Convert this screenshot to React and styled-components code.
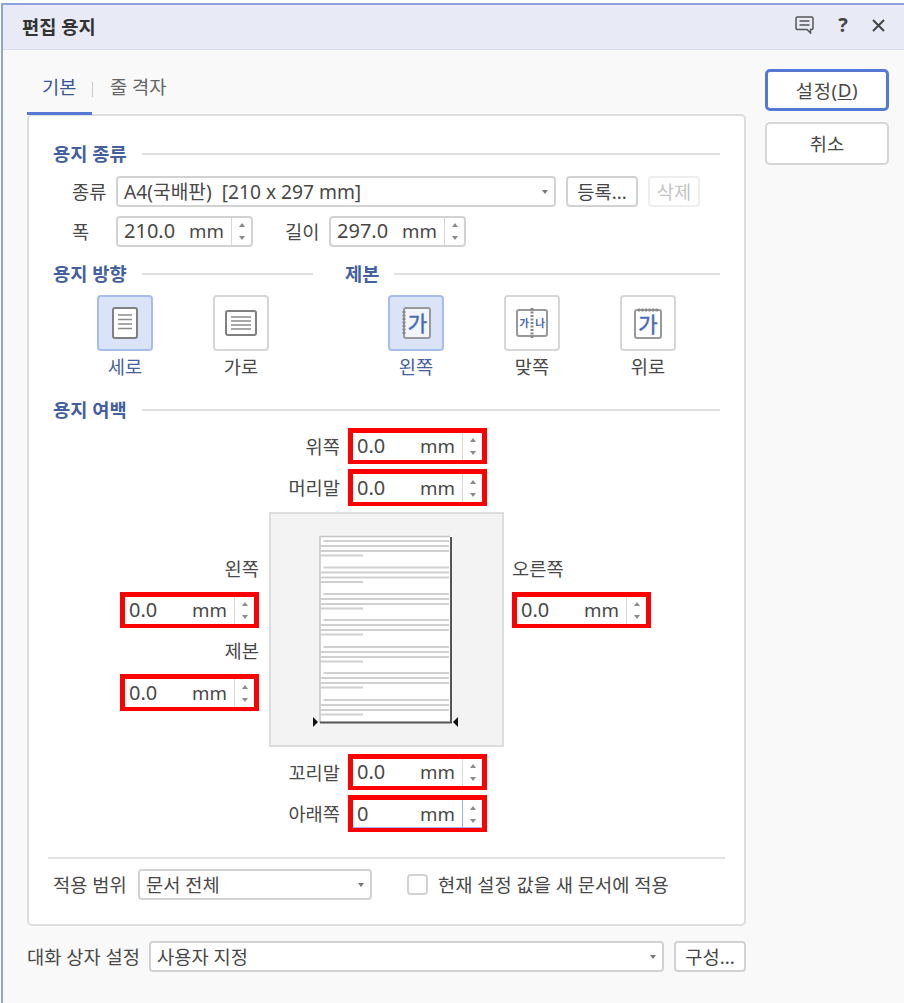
import styled, { createGlobalStyle } from "styled-components";

const GlobalStyle = createGlobalStyle`
  html, body {
    margin: 0;
    padding: 0;
    background: #fff;
  }
  * {
    box-sizing: border-box;
  }
`;

const FONT = `"Noto Sans", "Noto Sans CJK KR", sans-serif`;

const Page = styled.div`
  width: 904px;
  height: 1003px;
  padding: 3px 0 0 1px;
  overflow: hidden;
  font-family: ${FONT};
  font-size: 18.7px;
  color: #484848;
`;

const Dialog = styled.div`
  height: 1000px;
  background: #f9f9f9;
  border-top: 2px solid #8ea3dc;
  border-left: 2px solid #8ea3dc;
`;

const TitleBar = styled.div`
  height: 45px;
  display: flex;
  align-items: center;
  justify-content: space-between;
  padding: 0 19px 4px 19px;
  background: #e8ebf6;
  border-bottom: 1px solid #d8dcec;
`;

const Title = styled.div`
  font-weight: 700;
  font-size: 18.7px;
  color: #333;
`;

const TitleIcons = styled.div`
  display: flex;
  align-items: center;
  gap: 20px;
`;

const Help = styled.span`
  width: 18px;
  text-align: center;
  font-size: 20px;
  font-weight: 700;
  line-height: 1;
  color: #444;
`;

const Body = styled.div`
  display: flex;
  gap: 19px;
  padding-left: 24px;
`;

const Main = styled.div`
  width: 719px;
`;

const Tabs = styled.div`
  height: 64px;
  display: flex;
  align-items: flex-start;
`;

const Tab = styled.div`
  height: 65px;
  padding-top: 23px;
  line-height: 28px;
  width: ${(p) => p.$width}px;
  padding-left: ${(p) => p.$pad}px;
  color: ${(p) => (p.$active ? "#3a5596" : "#666")};
  border-bottom: ${(p) => (p.$active ? "3px solid #5578d6" : "none")};
  position: relative;
  z-index: 1;
`;

const TabSep = styled.div`
  width: 1px;
  height: 15px;
  margin-top: 32px;
  background: #c8c8c8;
`;

const Panel = styled.div`
  height: 812px;
  background: #fff;
  border: 2px solid #ddd;
  border-radius: 5px;
  padding: 26px 24px 0;
`;

const SectionTitle = styled.div`
  height: 24px;
  display: flex;
  align-items: center;
  gap: 15px;
  color: #45609f;
  font-weight: 700;
  font-size: 18.7px;
  margin-top: ${(p) => p.$top || 0}px;
  white-space: nowrap;
  &::after {
    content: "";
    flex: 1;
    height: 2px;
    background: #e0e0e0;
  }
`;

const SectionText = styled.span`
  margin-bottom: 4px;
`;

const Row = styled.div`
  display: flex;
  align-items: center;
  margin-top: ${(p) => p.$top}px;
  padding-left: ${(p) => p.$left || 0}px;
`;

const Label = styled.div`
  width: ${(p) => p.$width}px;
  flex: none;
  white-space: nowrap;
  margin-left: ${(p) => p.$left || 0}px;
  margin-bottom: 2px;
`;

const Box = styled.div`
  height: 31px;
  width: ${(p) => p.$width}px;
  flex: none;
  display: flex;
  align-items: center;
  background: #fff;
  border: 2px solid #d2d2d2;
  border-radius: 4px;
  padding-left: 6px;
  white-space: nowrap;
`;

const BoxText = styled.span`
  flex: 1;
  font-size: ${(p) => p.$size || 18.7}px;
  margin-bottom: 2px;
`;

const Caret = styled.span`
  flex: none;
  width: 0;
  height: 0;
  margin-right: 6px;
  border-left: 3.5px solid transparent;
  border-right: 3.5px solid transparent;
  border-top: 4px solid #777;
`;

const Unit = styled.span`
  flex: none;
  margin: 0 7px 2px 0;
`;

const SpinButtons = styled.div`
  flex: none;
  width: 20px;
  height: 100%;
  display: flex;
  flex-direction: column;
  align-items: center;
  justify-content: center;
  gap: 9px;
  border-left: 1px solid ${(p) => (p.$focus ? "#9db2e6" : "#d8d8d8")};
`;

const ArrowUp = styled.span`
  width: 0;
  height: 0;
  border-left: 3.5px solid transparent;
  border-right: 3.5px solid transparent;
  border-bottom: 4px solid #8a8a8a;
`;

const ArrowDown = styled(ArrowUp)`
  border-bottom: none;
  border-top: 4px solid #8a8a8a;
`;

const Button = styled.div`
  height: 31px;
  width: ${(p) => p.$width}px;
  flex: none;
  margin-left: 10px;
  padding-bottom: 2px;
  display: flex;
  align-items: center;
  justify-content: center;
  background: #fff;
  border: 2px solid ${(p) => (p.$disabled ? "#eee" : "#d2d2d2")};
  border-radius: 4px;
  color: ${(p) => (p.$disabled ? "#c4c4c4" : "#444")};
  white-space: nowrap;
`;

const OptionColumns = styled.div`
  display: grid;
  grid-template-columns: 260px 375px;
  column-gap: 32px;
  margin-top: 15px;
`;

const Tiles = styled.div`
  display: flex;
  gap: 60px;
  margin-top: 9px;
  padding-left: ${(p) => p.$left}px;
`;

const TileItem = styled.div`
  width: 56px;
  display: flex;
  flex-direction: column;
  align-items: center;
  gap: 4px;
  color: ${(p) => (p.$selected ? "#45609f" : "#484848")};
`;

const Tile = styled.div`
  width: 56px;
  height: 56px;
  display: flex;
  align-items: center;
  justify-content: center;
  background: ${(p) => (p.$selected ? "#dae3f8" : "#fff")};
  border: 2px solid ${(p) => (p.$selected ? "#a9bdec" : "#d6d6d6")};
  border-radius: 4px;
`;

const TileLabel = styled.div`
  height: 24px;
  line-height: 24px;
  white-space: nowrap;
`;

const MarginGrid = styled.div`
  display: grid;
  grid-template-columns: 206px 10px 235px 8px 139px;
  margin-top: 6px;
`;

const FieldStack = styled.div`
  grid-column: 3;
  grid-row: ${(p) => p.$row};
  display: flex;
  flex-direction: column;
  gap: 5px;
  padding-right: 17px;
  margin: ${(p) => p.$margin};
`;

const FieldRow = styled.div`
  display: flex;
  align-items: center;
  justify-content: flex-end;
  gap: 8px;
  white-space: nowrap;
`;

const FieldLabel = styled.span`
  margin-bottom: 2px;
`;

const SideColumn = styled.div`
  grid-row: 2;
  grid-column: ${(p) => (p.$right ? 5 : 1)};
  display: flex;
  flex-direction: column;
  align-items: ${(p) => (p.$right ? "flex-start" : "flex-end")};
  padding-top: 43px;
`;

const SideLabel = styled.div`
  height: 28px;
  line-height: 28px;
  margin-top: ${(p) => p.$top || 0}px;
  margin-bottom: 9px;
`;

const RedField = styled.div`
  width: 139px;
  height: ${(p) => p.$height}px;
  flex: none;
  display: flex;
  align-items: center;
  background: #fff;
  border: 5px solid #fe0000;
  border-bottom-width: 4px;
  padding-left: 4px;
  box-shadow: ${(p) => (p.$focus ? "inset 0 -1px 0 #9db2e6" : "none")};
`;

const Preview = styled.div`
  grid-column: 3;
  grid-row: 2;
  width: 235px;
  height: 235px;
  background: #f3f3f3;
  border: 2px solid #ddd;
  svg {
    display: block;
  }
`;

const Divider = styled.div`
  height: 2px;
  margin: 25px -5px 0;
  background: #e2e2e2;
`;

const Checkbox = styled.div`
  width: 21px;
  height: 21px;
  flex: none;
  margin: 0 10px 0 35px;
  background: #fff;
  border: 2px solid #d2d2d2;
  border-radius: 4px;
`;

const Footer = styled.div`
  display: flex;
  align-items: center;
  margin-top: 15px;
`;

const SideButtons = styled.div`
  width: 124px;
  padding-top: 19px;
  display: flex;
  flex-direction: column;
  gap: 11px;
`;

const ActionButton = styled.div`
  height: ${(p) => p.$height}px;
  padding-bottom: 2px;
  display: flex;
  align-items: center;
  justify-content: center;
  background: #fff;
  border: ${(p) => (p.$primary ? "3px solid #5578d6" : "2px solid #d6d6d6")};
  border-radius: 5px;
  letter-spacing: ${(p) => (p.$primary ? "0.6px" : "0")};
  u {
    text-underline-offset: 2px;
  }
`;

const paperLines = [541, 567.5, 594, 620, 647, 673, 700];

const PaperPreview = () => (
  <svg width="231" height="231" viewBox="271 514 231 231">
    <rect x="320" y="536" width="132" height="187" fill="#fff" />
    <path d="M320 536.5H450M320 536V723" stroke="#c4c4c4" strokeWidth="1.5" fill="none" />
    {paperLines.map((y) => (
      <g key={y} stroke="#d0d0d0" strokeWidth="2">
        <path d={`M323.5 ${y}H449`} />
        <path d={`M320 ${y + 5}H449`} />
        <path d={`M320 ${y + 10}H449`} />
        <path d={`M320 ${y + 14.5}H363`} />
      </g>
    ))}
    <path d="M451 537V722.5H320" stroke="#555" strokeWidth="2" fill="none" />
    <path d="M313 717V727L318 722Z" fill="#111" />
    <path d="M458 717V727L453 722Z" fill="#111" />
  </svg>
);

const PortraitIcon = () => (
  <svg width="26" height="32" viewBox="0 0 26 32">
    <rect x="1" y="1" width="24" height="30" rx="2" fill="#fff" stroke="#808080" strokeWidth="2" />
    <path d="M6 8H20M6 12.5H20M6 17H20M6 21.5H20" stroke="#8c8c8c" strokeWidth="1.5" />
  </svg>
);

const LandscapeIcon = () => (
  <svg width="32" height="26" viewBox="0 0 32 26">
    <rect x="1" y="1" width="30" height="24" rx="2" fill="#fff" stroke="#808080" strokeWidth="2" />
    <path d="M6 7H26M6 11H26M6 15H26M6 19H26" stroke="#8c8c8c" strokeWidth="1.5" />
  </svg>
);

const Ga = ({ x, y, size, weight = 400, text = "가" }) => (
  <text
    x={x}
    y={y}
    fontSize={size}
    fontWeight={weight}
    fill="#4a6ab8"
    stroke="#4a6ab8"
    strokeWidth={weight === 400 ? 0.5 : 0}
    textAnchor="middle"
    fontFamily={FONT}
  >
    {text}
  </text>
);

const BindLeftIcon = () => (
  <svg width="30" height="32" viewBox="0 0 30 32">
    <rect x="3" y="1" width="26" height="30" rx="2" fill="#f2f5fc" stroke="#999" strokeWidth="2" />
    <path d="M3 4V28" stroke="#888" strokeWidth="3" strokeDasharray="2 1.5" />
    <Ga x="16.5" y="24" size="21" />
  </svg>
);

const BindFacingIcon = () => (
  <svg width="32" height="32" viewBox="0 0 32 32">
    <rect x="1" y="3" width="30" height="26" rx="2" fill="#fff" stroke="#999" strokeWidth="2" />
    <path d="M16 1V31" stroke="#888" strokeWidth="3" strokeDasharray="2 1.5" />
    <Ga x="8" y="20" size="10.5" weight={700} />
    <Ga x="24" y="20" size="10.5" weight={700} text="나" />
  </svg>
);

const BindTopIcon = () => (
  <svg width="28" height="32" viewBox="0 0 28 32">
    <rect x="1" y="3" width="26" height="28" rx="2" fill="#fff" stroke="#999" strokeWidth="2" />
    <path d="M4 3H24" stroke="#888" strokeWidth="3" strokeDasharray="2 1.5" />
    <Ga x="14" y="25" size="21" />
  </svg>
);

const CommentIcon = () => (
  <svg width="19" height="18" viewBox="0 0 19 18" fill="none" stroke="#555" strokeWidth="1.5">
    <path d="M2.5 1H16.5A1.5 1.5 0 0 1 18 2.5V12A1.5 1.5 0 0 1 16.5 13.5H15.5V17L12 13.5H2.5A1.5 1.5 0 0 1 1 12V2.5A1.5 1.5 0 0 1 2.5 1Z" />
    <path d="M4.5 5H14.5M4.5 9H14.5" />
  </svg>
);

const CloseIcon = () => (
  <svg width="13" height="13" viewBox="0 0 13 13" stroke="#444" strokeWidth="2">
    <path d="M1 1L12 12M12 1L1 12" />
  </svg>
);

const Spinner = ({ focus }) => (
  <SpinButtons $focus={focus}>
    <ArrowUp />
    <ArrowDown />
  </SpinButtons>
);

const MarginField = ({ value = "0.0", height = 36, focus }) => (
  <RedField $height={height} $focus={focus}>
    <BoxText $size={20}>{value}</BoxText>
    <Unit>mm</Unit>
    <Spinner focus={focus} />
  </RedField>
);

const App = () => (
  <Page>
    <GlobalStyle />
    <Dialog>
      <TitleBar>
        <Title>편집 용지</Title>
        <TitleIcons>
          <CommentIcon />
          <Help>?</Help>
          <CloseIcon />
        </TitleIcons>
      </TitleBar>
      <Body>
        <Main>
          <Tabs>
            <Tab $active $width={65} $pad={15}>기본</Tab>
            <TabSep />
            <Tab $width={90} $pad={17}>줄 격자</Tab>
          </Tabs>
          <Panel>
            <SectionTitle><SectionText>용지 종류</SectionText></SectionTitle>
            <Row $top={10} $left={19}>
              <Label $width={44}>종류</Label>
              <Box $width={440}>
                <BoxText $size={19.2}>A4(국배판)&nbsp; [210 x 297 mm]</BoxText>
                <Caret />
              </Box>
              <Button $width={72}>등록...</Button>
              <Button $width={52} $disabled>삭제</Button>
            </Row>
            <Row $top={9} $left={19}>
              <Label $width={44}>폭</Label>
              <Box $width={137}>
                <BoxText $size={20}>210.0</BoxText>
                <Unit>mm</Unit>
                <Spinner />
              </Box>
              <Label $width={44} $left={32}>길이</Label>
              <Box $width={137}>
                <BoxText $size={20}>297.0</BoxText>
                <Unit>mm</Unit>
                <Spinner />
              </Box>
            </Row>
            <OptionColumns>
              <div>
                <SectionTitle><SectionText>용지 방향</SectionText></SectionTitle>
                <Tiles $left={44}>
                  <TileItem $selected>
                    <Tile $selected><PortraitIcon /></Tile>
                    <TileLabel>세로</TileLabel>
                  </TileItem>
                  <TileItem>
                    <Tile><LandscapeIcon /></Tile>
                    <TileLabel>가로</TileLabel>
                  </TileItem>
                </Tiles>
              </div>
              <div>
                <SectionTitle><SectionText>제본</SectionText></SectionTitle>
                <Tiles $left={43}>
                  <TileItem $selected>
                    <Tile $selected><BindLeftIcon /></Tile>
                    <TileLabel>왼쪽</TileLabel>
                  </TileItem>
                  <TileItem>
                    <Tile><BindFacingIcon /></Tile>
                    <TileLabel>맞쪽</TileLabel>
                  </TileItem>
                  <TileItem>
                    <Tile><BindTopIcon /></Tile>
                    <TileLabel>위로</TileLabel>
                  </TileItem>
                </Tiles>
              </div>
            </OptionColumns>
            <SectionTitle $top={19}><SectionText>용지 여백</SectionText></SectionTitle>
            <MarginGrid>
              <FieldStack $row={1} $margin="0 0 6px">
                <FieldRow><FieldLabel>위쪽</FieldLabel><MarginField /></FieldRow>
                <FieldRow><FieldLabel>머리말</FieldLabel><MarginField height={37} /></FieldRow>
              </FieldStack>
              <SideColumn>
                <SideLabel>왼쪽</SideLabel>
                <MarginField />
                <SideLabel $top={9}>제본</SideLabel>
                <MarginField height={37} />
              </SideColumn>
              <Preview><PaperPreview /></Preview>
              <SideColumn $right>
                <SideLabel>오른쪽</SideLabel>
                <MarginField />
              </SideColumn>
              <FieldStack $row={3} $margin="7px 0 0">
                <FieldRow><FieldLabel>꼬리말</FieldLabel><MarginField /></FieldRow>
                <FieldRow><FieldLabel>아래쪽</FieldLabel><MarginField value="0" height={37} focus /></FieldRow>
              </FieldStack>
            </MarginGrid>
            <Divider />
            <Row $top={10}>
              <Label $width={85}>적용 범위</Label>
              <Box $width={234}>
                <BoxText>문서 전체</BoxText>
                <Caret />
              </Box>
              <Checkbox />
              <FieldLabel>현재 설정 값을 새 문서에 적용</FieldLabel>
            </Row>
          </Panel>
          <Footer>
            <Label $width={122}>대화 상자 설정</Label>
            <Box $width={515}>
              <BoxText>사용자 지정</BoxText>
              <Caret />
            </Box>
            <Button $width={72}>구성...</Button>
          </Footer>
        </Main>
        <SideButtons>
          <ActionButton $primary $height={42}>설정(<u>D</u>)</ActionButton>
          <ActionButton $height={43}>취소</ActionButton>
        </SideButtons>
      </Body>
    </Dialog>
  </Page>
);

export default App;
